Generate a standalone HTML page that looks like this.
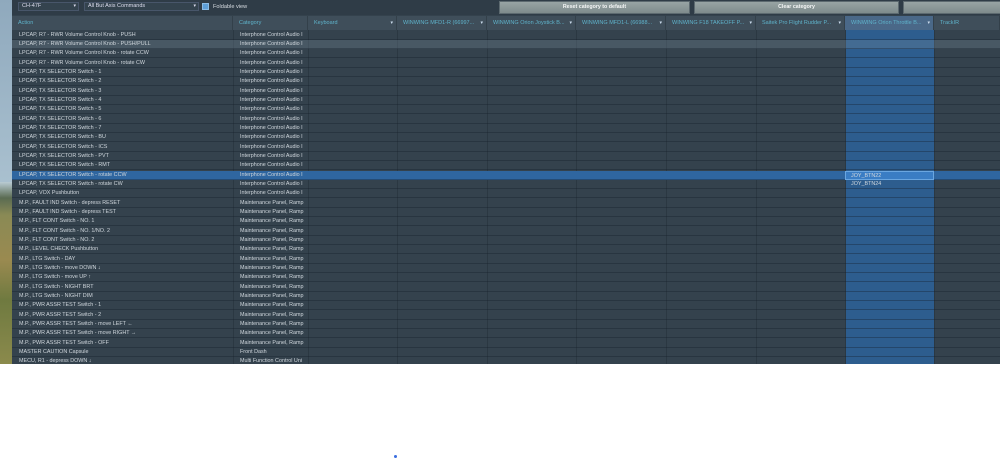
<!DOCTYPE html>
<html><head><meta charset="utf-8"><style>
*{margin:0;padding:0;box-sizing:border-box}
body{width:1000px;height:459px;background:#fff;position:relative;overflow:hidden;font-family:"Liberation Sans",sans-serif;font-size:5.6px;color:#cfd6dc}
#left{position:absolute;left:0;top:0;width:12px;height:364px;background:linear-gradient(#8fa9bd 0,#a9c0cf 50%,#b9cbd3 180px,#5a6b52 198px,#8a8a55 215px,#9a8a50 260px,#6f7a40 300px,#8b8a4c 364px)}
#panel{position:absolute;left:12px;top:0;width:988px;height:364px;background:#34424d;overflow:hidden}
#top{position:absolute;left:0;top:0;width:988px;height:15px;background:#2f3c47}
.dd{position:absolute;top:2px;height:9px;background:#34434e;border:1px solid #48566a;color:#dde;padding-left:3px;line-height:7px;font-size:5.5px}
.dd:after{content:"▾";position:absolute;right:2px;top:0;font-size:5px}
.btn{position:absolute;top:1px;height:13px;background:linear-gradient(#98a4a4,#7e8b8c);border:1px solid #5d6a70;color:#f4f6f6;font-weight:bold;text-align:center;line-height:11px;font-size:5.3px}
#hdr{position:absolute;left:0;top:16px;width:988px;height:14px;background:#3f4e5a}
.h{position:absolute;top:0;height:14px;line-height:14px;color:#5fb3cb;padding-left:6px;font-size:5.5px;border-right:1px solid #33404a;white-space:nowrap;overflow:hidden}
.h.a:after{content:"▾";position:absolute;right:3px;color:#cde;font-size:5px}
.r{position:absolute;left:0;width:988px;height:9.33px;border-bottom:1px solid rgba(20,30,40,0.35);white-space:nowrap}
.r span{position:absolute;top:0;line-height:8.5px;font-size:5.4px}
.c1{left:7px}.c2{left:228px}
.vl{position:absolute;top:16px;width:1px;height:348px;background:#2b3842}
</style></head><body>
<div id="left"></div>
<div id="panel">
<div id="top"></div>
<div class="dd" style="left:6px;width:61px">CH-47F</div>
<div class="dd" style="left:72px;width:115px">All But Axis Commands</div>
<div style="position:absolute;left:190px;top:3px;width:7px;height:7px;background:#5d9fd8;border:1px solid #8bbce6"></div>
<div style="position:absolute;left:201px;top:3px;line-height:8px;color:#d8dde2">Foldable view</div>
<div class="btn" style="left:487px;width:191px">Reset category to default</div>
<div class="btn" style="left:682px;width:205px">Clear category</div>
<div class="btn" style="left:891px;width:100px"></div>
<div style="position:absolute;left:833px;top:30px;width:89px;height:334px;background:#2d5d8e"></div>
<div class="vl" style="left:221px"></div><div class="vl" style="left:296px"></div><div class="vl" style="left:385px"></div><div class="vl" style="left:475px"></div><div class="vl" style="left:564px"></div><div class="vl" style="left:654px"></div><div class="vl" style="left:744px"></div><div class="vl" style="left:833px"></div><div class="vl" style="left:922px"></div>
<div id="hdr">
<div class="h" style="left:0;width:221px">Action</div>
<div class="h" style="left:221px;width:75px">Category</div>
<div class="h a" style="left:296px;width:89px">Keyboard</div>
<div class="h a" style="left:385px;width:90px">WINWING MFD1-R (66997...</div>
<div class="h a" style="left:475px;width:89px">WINWING Orion Joystick B...</div>
<div class="h a" style="left:564px;width:90px">WINWING MFD1-L (66988...</div>
<div class="h a" style="left:654px;width:90px">WINWING F18 TAKEOFF P...</div>
<div class="h a" style="left:744px;width:89px">Saitek Pro Flight Rudder P...</div>
<div class="h a" style="left:833px;width:89px;background:#4a6888">WINWING Orion Throttle B...</div>
<div class="h" style="left:922px;width:66px">TrackIR</div>
</div>
<div id="rows" style="position:absolute;left:0;top:30.5px;width:988px">
<div class="r" style="top:0"><span class="c1">LPCAP, R7 - RWR Volume Control Knob - PUSH</span><span class="c2">Interphone Control Audio I</span></div>
<div class="r" style="top:9.33px;background:rgba(120,140,155,0.3)"><span class="c1">LPCAP, R7 - RWR Volume Control Knob - PUSH/PULL</span><span class="c2">Interphone Control Audio I</span></div>
<div class="r" style="top:18.66px"><span class="c1">LPCAP, R7 - RWR Volume Control Knob - rotate CCW</span><span class="c2">Interphone Control Audio I</span></div>
<div class="r" style="top:28px"><span class="c1">LPCAP, R7 - RWR Volume Control Knob - rotate CW</span><span class="c2">Interphone Control Audio I</span></div>
<div class="r" style="top:37.3px"><span class="c1">LPCAP, TX SELECTOR Switch - 1</span><span class="c2">Interphone Control Audio I</span></div>
<div class="r" style="top:46.6px"><span class="c1">LPCAP, TX SELECTOR Switch - 2</span><span class="c2">Interphone Control Audio I</span></div>
<div class="r" style="top:56px"><span class="c1">LPCAP, TX SELECTOR Switch - 3</span><span class="c2">Interphone Control Audio I</span></div>
<div class="r" style="top:65.3px"><span class="c1">LPCAP, TX SELECTOR Switch - 4</span><span class="c2">Interphone Control Audio I</span></div>
<div class="r" style="top:74.6px"><span class="c1">LPCAP, TX SELECTOR Switch - 5</span><span class="c2">Interphone Control Audio I</span></div>
<div class="r" style="top:84px"><span class="c1">LPCAP, TX SELECTOR Switch - 6</span><span class="c2">Interphone Control Audio I</span></div>
<div class="r" style="top:93.3px"><span class="c1">LPCAP, TX SELECTOR Switch - 7</span><span class="c2">Interphone Control Audio I</span></div>
<div class="r" style="top:102.6px"><span class="c1">LPCAP, TX SELECTOR Switch - BU</span><span class="c2">Interphone Control Audio I</span></div>
<div class="r" style="top:112px"><span class="c1">LPCAP, TX SELECTOR Switch - ICS</span><span class="c2">Interphone Control Audio I</span></div>
<div class="r" style="top:121.3px"><span class="c1">LPCAP, TX SELECTOR Switch - PVT</span><span class="c2">Interphone Control Audio I</span></div>
<div class="r" style="top:130.6px"><span class="c1">LPCAP, TX SELECTOR Switch - RMT</span><span class="c2">Interphone Control Audio I</span></div>
<div class="r" style="top:140px;background:#2f66a0"><span class="c1">LPCAP, TX SELECTOR Switch - rotate CCW</span><span class="c2">Interphone Control Audio I</span><span style="left:833px;width:89px;height:9px;background:#3a7dc4;border:1px solid #6aa6e0;padding-left:5px">JOY_BTN22</span></div>
<div class="r" style="top:149.3px"><span class="c1">LPCAP, TX SELECTOR Switch - rotate CW</span><span class="c2">Interphone Control Audio I</span><span style="left:839px">JOY_BTN24</span></div>
<div class="r" style="top:158.6px"><span class="c1">LPCAP, VOX Pushbutton</span><span class="c2">Interphone Control Audio I</span></div>
<div class="r" style="top:168px"><span class="c1">M.P., FAULT IND Switch - depress RESET</span><span class="c2">Maintenance Panel, Ramp</span></div>
<div class="r" style="top:177.3px"><span class="c1">M.P., FAULT IND Switch - depress TEST</span><span class="c2">Maintenance Panel, Ramp</span></div>
<div class="r" style="top:186.6px"><span class="c1">M.P., FLT CONT Switch - NO. 1</span><span class="c2">Maintenance Panel, Ramp</span></div>
<div class="r" style="top:196px"><span class="c1">M.P., FLT CONT Switch - NO. 1/NO. 2</span><span class="c2">Maintenance Panel, Ramp</span></div>
<div class="r" style="top:205.3px"><span class="c1">M.P., FLT CONT Switch - NO. 2</span><span class="c2">Maintenance Panel, Ramp</span></div>
<div class="r" style="top:214.6px"><span class="c1">M.P., LEVEL CHECK Pushbutton</span><span class="c2">Maintenance Panel, Ramp</span></div>
<div class="r" style="top:224px"><span class="c1">M.P., LTG Switch - DAY</span><span class="c2">Maintenance Panel, Ramp</span></div>
<div class="r" style="top:233.3px"><span class="c1">M.P., LTG Switch - move DOWN ↓</span><span class="c2">Maintenance Panel, Ramp</span></div>
<div class="r" style="top:242.6px"><span class="c1">M.P., LTG Switch - move UP ↑</span><span class="c2">Maintenance Panel, Ramp</span></div>
<div class="r" style="top:252px"><span class="c1">M.P., LTG Switch - NIGHT BRT</span><span class="c2">Maintenance Panel, Ramp</span></div>
<div class="r" style="top:261.3px"><span class="c1">M.P., LTG Switch - NIGHT DIM</span><span class="c2">Maintenance Panel, Ramp</span></div>
<div class="r" style="top:270.6px"><span class="c1">M.P., PWR ASSR TEST Switch - 1</span><span class="c2">Maintenance Panel, Ramp</span></div>
<div class="r" style="top:280px"><span class="c1">M.P., PWR ASSR TEST Switch - 2</span><span class="c2">Maintenance Panel, Ramp</span></div>
<div class="r" style="top:289.3px"><span class="c1">M.P., PWR ASSR TEST Switch - move LEFT ←</span><span class="c2">Maintenance Panel, Ramp</span></div>
<div class="r" style="top:298.6px"><span class="c1">M.P., PWR ASSR TEST Switch - move RIGHT →</span><span class="c2">Maintenance Panel, Ramp</span></div>
<div class="r" style="top:308px"><span class="c1">M.P., PWR ASSR TEST Switch - OFF</span><span class="c2">Maintenance Panel, Ramp</span></div>
<div class="r" style="top:317.3px"><span class="c1">MASTER CAUTION Capsule</span><span class="c2">Front Dash</span></div>
<div class="r" style="top:326.6px"><span class="c1">MECU, R1 - depress DOWN ↓</span><span class="c2">Multi Function Control Uni</span></div>
</div>
</div>
<div style="position:absolute;left:394px;top:455px;width:3px;height:3px;background:#3a6ee0;border-radius:50%"></div>
</body></html>
